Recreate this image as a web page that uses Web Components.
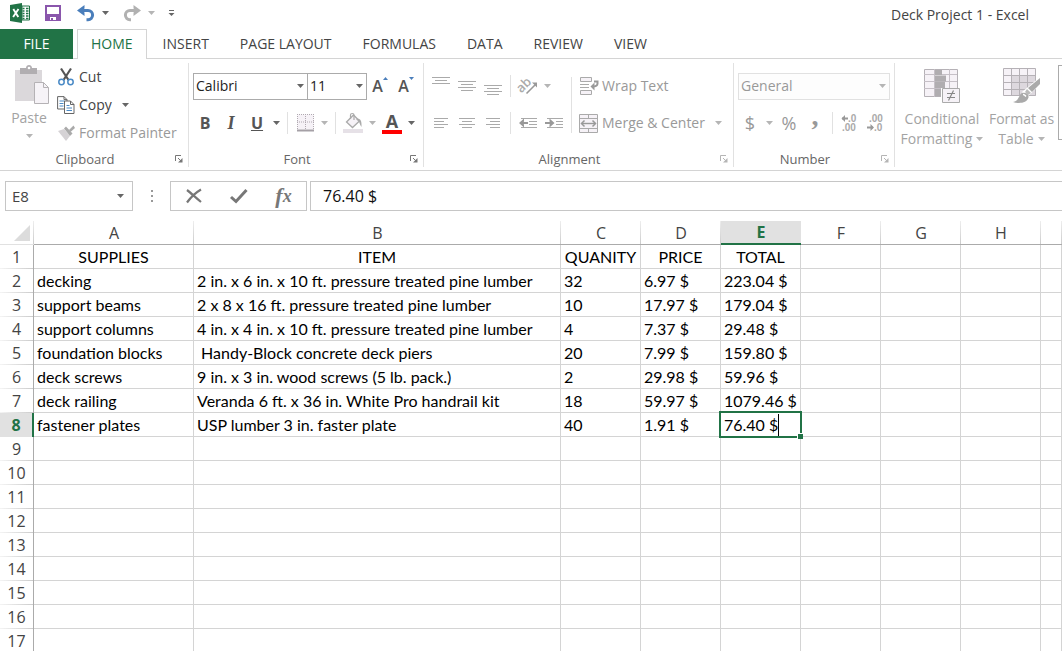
<!DOCTYPE html>
<html lang="en">
<head>
<meta charset="utf-8">
<title>Deck Project 1 - Excel</title>
<style>
  html, body { margin: 0; height: 100%; }
  body {
    --ui: "Open Sans", "Noto Sans", sans-serif;
    --cell: Lato, "Open Sans", sans-serif;
    --green: #217346;
    --line: #d4d4d4;
    --text: #444;
    --dim: #a3a3a3;
    font: 14px/20px var(--ui);
    color: var(--text);
    background: #fff;
    overflow: hidden;
  }
</style>
</head>
<body>
<excel-window>
  <title-bar slot="title">Deck Project 1 - Excel</title-bar>
  <tab-strip slot="tabs"></tab-strip>
  <ribbon-bar slot="ribbon"></ribbon-bar>
  <formula-bar slot="formula" cell="E8" value="76.40 $"></formula-bar>
  <sheet-grid slot="sheet"></sheet-grid>
</excel-window>

<script>
const ICONS = {
  excel: [20, 20, `<path d="M12 3h7.500v14H12z" fill="#fff" stroke="#217346"/><path d="M12.500 5.500h2M16 5.500h2.500M12.500 8h2M16 8h2.500M12.500 10.500h2M16 10.500h2.500M12.500 13h2M16 13h2.500M12.500 15.500h2M16 15.500h2.500" stroke="#217346" stroke-width="1.400"/><path d="M0 2 12 0v20L0 18z" fill="#217346"/><path d="m3.300 6 5 8M8.500 6l-5.400 8" stroke="#fff" stroke-width="1.900"/>`],
  save: [16, 16, `<path d="M1 1h14v14H1z" fill="#fff" stroke="#8a56ac" stroke-width="2"/><path d="M0 9h16v7h-4v-4H4v4H0z" fill="#8a56ac"/><path d="M4 11h8v5H4z" fill="#8a56ac"/><path d="M5 12h6v3H8v-2H6v2H5z" fill="#fff"/>`],
  undo: [18, 16, `<path d="M3 5.500h8a4.600 4.600 0 0 1 0 9.200H9.500" fill="none" stroke="#4a7ebb" stroke-width="3"/><path d="M7.500 0 0 5.500 7.500 11V7.500L5 5.500l2.500-2z" fill="#4a7ebb"/>`],
  redo: [18, 16, `<path d="M15 5.500H7a4.600 4.600 0 0 0 0 9.200h1" fill="none" stroke="#b1b1b1" stroke-width="3"/><path d="m10.500 0 7.500 5.500-7.500 5.500V7.500l2.500-2-2.500-2z" fill="#b1b1b1"/>`],
  qat: [7, 8, `<path d="M1 1.500h5" stroke="#666"/><path d="M.5 4h6l-3 3z" fill="#666"/>`],
  paste: [40, 40, `<g transform="translate(6 0)"><path d="M0 5h27v31H0z" fill="#dbd8db"/><path d="M5 3h6c0-4 6-4 6 0h5v6H5z" fill="#b1aeb1"/><circle cx="14" cy="3" r="1.300" fill="#fff"/><path d="M19.500 17.500h9l5 5v16h-14z" fill="#f6f3f7" stroke="#b5b2b5"/><path d="M28.500 17.500v5h5" fill="none" stroke="#b5b2b5"/></g>`],
  cut: [16, 18, `<path d="M3 .5 10.500 12M13 .5 5.500 12" stroke="#555" stroke-width="2.200"/><circle cx="3.500" cy="14" r="2.700" fill="none" stroke="#4a8ac6" stroke-width="1.500"/><circle cx="12.500" cy="14" r="2.700" fill="none" stroke="#4a8ac6" stroke-width="1.500"/>`],
  copy: [18, 18, `<path d="M.6.600h6.400l3 3V13H.6zM7 .6v3h3" fill="#fff" stroke="#666"/><path d="M2.500 5h5M2.500 7.500h4M2.500 10h4" stroke="#4a8ac6"/><path d="M7.500 5h6l3.500 3.500v9H7.500zM13.500 5v3.500H17" fill="#fff" stroke="#666"/><path d="M9.500 9.500h3M9.500 12h5.500M9.500 14.500H15" stroke="#4a8ac6" stroke-width="1.200"/>`],
  painter: [17, 16, `<path d="m0 6 6-2 6 7-4 5z" fill="#d5d2d5"/><path d="m6 3.500 2-2 6.500 7-2.500 2.500z" fill="#aaa"/><path d="m11 5 4.500-4.500L17 3l-4.500 4z" fill="#aaa"/>`],
  borders: [17, 18, `<path d="M.5.500h16v15H.5z" fill="#f6f2f7"/><path d="M.5 0v16M8.500 0v16M16.500 0v16M0 .5h17M0 8h17" stroke="#b0a9b1" stroke-dasharray="1 1"/><path d="M0 16.500h17" stroke="#a5a0a6" stroke-width="2"/>`],
  fill: [20, 20, `<path d="M0 16h20v4H0z" fill="#e6e1e7"/><path d="m3.500 9 7-7 6 6-7 6.500z" fill="#f6f2f7" stroke="#aaa" stroke-width="1.300"/><path d="M7.500 6V2c0-2 3.500-2 3.500 0v5" fill="none" stroke="#aaa" stroke-width="1.200"/><path d="M13 6c4-1 6 1 5.500 8C16.500 12 17 9 15 8z" fill="#aaa"/>`],
  top: [18, 20, `<path d="M0 1.500h18M3 4.500h12M0 7.500h18" stroke="#aaa"/>`],
  middle: [18, 20, `<path d="M0 5.500h18M3 8.500h12M0 11.500h18M3 14.500h12" stroke="#aaa"/>`],
  bottom: [18, 20, `<path d="M0 9.500h18M3 12.500h12M0 15.500h18M3 18.500h12" stroke="#aaa"/>`],
  left: [16, 12, `<path d="M1 1.500h14M1 4.500h10M1 7.500h14M1 10.500h10" stroke="#aaa"/>`],
  center: [16, 12, `<path d="M0 1.500h16M3 4.500h10M0 7.500h16M3 10.500h10" stroke="#aaa"/>`],
  right: [16, 12, `<path d="M1 1.500h14M5 4.500h10M1 7.500h14M5 10.500h10" stroke="#aaa"/>`],
  orient: [20, 20, `<text x="-2" y="13" transform="rotate(-45 6 9)" font-family="Open Sans, sans-serif" font-size="13" font-weight="600" fill="#aaa">ab</text><path d="m8.500 17.500 9-9" stroke="#999" stroke-width="1.600"/><path d="M19 6.500v5l-5-5z" fill="#999"/>`],
  outdent: [18, 12, `<path d="M2 1.500h16M10 4.500h8M10 7.500h8M2 10.500h16" stroke="#aaa"/><path d="M2 6h7" stroke="#999" stroke-width="2"/><path d="M5 1.500 0 6l5 4.500V7.500L3.500 6 5 4.500z" fill="#999"/>`],
  indent: [18, 12, `<path d="M2 1.500h16M11 4.500h7M11 7.500h7M2 10.500h16" stroke="#aaa"/><path d="M0 6h7" stroke="#999" stroke-width="2"/><path d="M4.500 1.500 9.500 6l-5 4.500V7.500L6 6 4.500 4.500z" fill="#999"/>`],
  wrap: [19, 18, `<path d="M.5.500h11v4H.5zM.5 13.500h11v4H.5z" fill="#f6f2f7" stroke="#aaa"/><path d="M0 7.500h9M0 10.500h9" stroke="#aaa"/><path d="M14 4.500h3.500v2c0 2-1 3-5 3" fill="none" stroke="#999" stroke-width="2"/><path d="m14.500 5.500-4 4 4 4v-3z" fill="#999"/>`],
  merge: [20, 19, `<path d="M.5.500h18v18H.5z" fill="#f6f2f7" stroke="#aaa"/><path d="M0 4.500h19M0 14.500h19M9.500 0v4.500M9.500 14.500V19" stroke="#aaa"/><path d="M3 9.500h13" stroke="#999" stroke-width="1.400"/><path d="M5.500 6.500 2.500 9.500l3 3M13.500 6.500l3 3-3 3" fill="none" stroke="#999" stroke-width="1.500"/>`],
  moredec: [18, 20, `<path d="M1 5.500h6" stroke="#999" stroke-width="2"/><path d="M4 2 .5 5.500 4 9z" fill="#999"/><g font-family="Liberation Sans, sans-serif" font-size="10" font-weight="700" fill="#aaa"><text x="7" y="9">.0</text><text x="1" y="18">.00</text></g>`],
  lessdec: [18, 20, `<path d="M0 14.500h6" stroke="#999" stroke-width="2"/><path d="M3.500 11 7 14.500 3.500 18z" fill="#999"/><g font-family="Liberation Sans, sans-serif" font-size="10" font-weight="700" fill="#aaa"><text x="2" y="9">.00</text><text x="7" y="18">.0</text></g>`],
  cond: [37, 36, `<path d="M.5 1.500h33v27H.5z" fill="#f6f2f7" stroke="#b5b1b6"/><path d="M0 6.500h33M0 13.500h33M0 20.500h33M10.500 1v28M25.500 1v28" stroke="#c6c0c7"/><path d="M11 2h7v5h-7zM11 7.500h11v6H11zM11 14h10v6H11zM11 21h7v7h-7z" fill="#b0adb0"/><path d="M17 20h20v16H17z" fill="#fff"/><path d="M18.500 20.500h17v14h-17z" fill="#f6f2f7" stroke="#aaa"/><path d="M23 25.500h8M23 29.500h8M29.500 22.500l-5 10" stroke="#888" stroke-width="1.200"/>`],
  table: [38, 36, `<path d="M.5.500h32v27H.5z" fill="#f6f2f7"/><path d="M8 7h25v21H8z" fill="#ddd8de"/><path d="M.5.500h32v27H.5zM0 7.500h33M0 14.500h33M0 21.500h33M8.500 0v28M16.500 0v28M24.500 0v28" fill="none" stroke="#b5b1b6"/><path d="M37 9v8L24 29l-5-5z" fill="#fff"/><path d="M37 10v6l-8 8-4-4z" fill="#aaa"/><path d="m24 21 4 4-3 2-3-3z" fill="#bbb"/><path d="M22 25c2 0 4 2 3.500 4.500C24 35 16 36 10 34c5-1 5-4 7-7 1-2 3-2.500 5-2z" fill="#aaa"/><path d="M20 26.500c2 0 2 1 3 2" stroke="#fff" fill="none" stroke-width="1.500"/>`],
  cancel: [16, 14, `<path d="M1 1c4 3 9 8 14 12M15 .5C9 4 5 8 1 13.500" fill="none" stroke="#777" stroke-width="2.200"/>`],
  enter: [18, 14, `<path d="m1 8 5 4.500L16.500 1" fill="none" stroke="#777" stroke-width="3"/>`],
  launch: [8, 8, `<path d="M.5 6V.5H6" fill="none" stroke="currentColor"/><path d="M3 3l3.500 3.500" stroke="currentColor"/><path d="M7.500 3v4.500H3z" fill="currentColor"/>`],
  arrow: [7, 4, `<path d="M0 0h7L3.500 4z" fill="currentColor"/>`],
};
const icon = (name) => {
  const [w, h, body] = ICONS[name];
  return `<svg width="${w}" height="${h}" viewBox="0 0 ${w} ${h}" fill="none" aria-hidden="true">${body}</svg>`;
};
const define = (name, css, html) => customElements.define(name, class extends HTMLElement {
  constructor() {
    super();
    this.attachShadow({ mode: "open" });
  }
  connectedCallback() {
    const t = document.createElement("template");
    t.innerHTML = `<style>:host,*{box-sizing:border-box}svg{display:block;flex:none;overflow:visible}button{font:inherit;color:inherit;background:none;border:0;padding:0;margin:0}${css}</style>${typeof html === "function" ? html(this) : html}`;
    this.shadowRoot.replaceChildren(t.content.cloneNode(true));
  }
});

/* Square command button; the slot carries a letter or a caption beside the icon. */
define("tool-button", `
  :host { display: flex; flex: none; height: 28px; color: #555; }
  :host([off]) { color: #999; }
  :host([off]) .drop { color: #b5b5b5; }
  button { display: flex; align-items: center; }
  .face { display: flex; width: 26px; justify-content: center; }
  .drop { width: 13px; justify-content: center; color: #666; }
  :host([caption]) .drop { width: 27px; }
`, (el) => {
  const face = el.hasAttribute("icon") ? icon(el.getAttribute("icon")) : "<slot></slot>";
  const caption = el.hasAttribute("caption") ? `<span>${el.getAttribute("caption")}</span>` : "";
  const name = el.getAttribute("name") || el.getAttribute("caption");
  return `<button type="button" aria-label="${name}"><span class="face">${face}</span>${caption}</button>` +
    (el.hasAttribute("drop") ? `<button type="button" class="drop" aria-label="${name} options">${icon("arrow")}</button>` : "");
});

define("tool-divider", `
  :host { display: block; flex: none; width: 1px; height: 22px; margin: 0 4px; background: #e1e1e1; }
  :host([tall]) { height: 56px; }
`, "");

define("big-button", `
  :host { display: block; flex: none; color: var(--dim); }
  button { display: flex; flex-direction: column; align-items: center; width: 100%; white-space: nowrap; }
  .pic { display: flex; height: 40px; margin-bottom: 3px; align-items: center; }
  .more { display: flex; align-items: center; gap: 4px; min-height: 16px; color: #b5b5b5; }
  ::slotted([slot=second]) { color: var(--dim); }
  :host([lines]) .more { min-height: 20px; }
`, (el) => `<button type="button"><span class="pic">${icon(el.getAttribute("icon"))}</span><span><slot></slot></span><span class="more"><slot name="second"></slot>${icon("arrow")}</span></button>`);

define("pick-list", `
  :host { display: grid; align-items: center; height: 27px; color: #222; }
  select { grid-area: 1/1; width: 100%; height: 27px; appearance: none; border: 1px solid #ababab; border-radius: 0; background: #fff; padding: 0 2px; font: inherit; color: inherit; opacity: 1; }
  svg { grid-area: 1/1; justify-self: end; margin-right: 4px; color: #666; pointer-events: none; }
  :host([off]) { color: #999; }
  :host([off]) select { border-color: #e1e1e1; background: #fdfdfd; }
  :host([off]) svg { color: #b5b5b5; }
`, (el) => `<select aria-label="${el.getAttribute("name")}"><option>${el.getAttribute("value")}</option></select>${icon("arrow")}`);

define("ribbon-group", `
  :host { display: flex; flex-direction: column; flex: none; border-right: 1px solid #e1e1e1; }
  .body { flex: 1; }
  footer { display: flex; align-items: center; height: 16px; padding-right: 5px; font-size: 13px; line-height: 16px; color: #666; }
  footer span { flex: 1; text-align: center; padding-right: 5px; }
  .launch { color: #777; }
  :host([off]) .launch { color: #b5b5b5; }
`, (el) => `<div class="body"><slot></slot></div><footer><span>${el.getAttribute("label")}</span><button type="button" class="launch" aria-label="${el.getAttribute("label")} settings">${icon("launch")}</button></footer>`);

define("title-bar", `
  :host { display: flex; align-items: center; gap: 7px; height: 29px; padding: 0 33px 3px 7px; }
  h1 { flex: 1; margin: 0; text-align: right; font-size: 14px; font-weight: 400; padding-top: 3px; }
  .qat { width: 13px; display: flex; justify-content: center; }
`, `<tool-button icon="excel" name="Excel"></tool-button>
  <tool-button icon="save" name="Save"></tool-button>
  <tool-button icon="undo" name="Undo" drop></tool-button>
  <tool-button icon="redo" name="Redo" drop off></tool-button>
  <button type="button" class="qat" aria-label="Customize toolbar">${icon("qat")}</button>
  <h1><slot></slot></h1>`);

define("tab-strip", `
  :host { display: block; }
  nav { display: flex; gap: 1px; height: 30px; border-bottom: 1px solid var(--line); }
  a { display: flex; align-items: center; height: 29px; padding: 0 15px; color: inherit; text-decoration: none; white-space: nowrap; }
  .file { width: 73px; height: 30px; margin-right: 3px; padding: 0; justify-content: center; background: var(--green); color: #fff; }
  .on { height: 30px; padding: 0 13px 1px; border: 1px solid var(--line); border-bottom: 0; background: #fff; color: var(--green); }
`, `<nav><a class="file" href="#file">FILE</a><a class="on" href="#home">HOME</a>${
  ["INSERT", "PAGE LAYOUT", "FORMULAS", "DATA", "REVIEW", "VIEW"].map((t) => `<a href="#${t.toLowerCase().replace(" ", "-")}">${t}</a>`).join("")}</nav>`);

define("ribbon-bar", `
  :host { display: flex; height: 112px; padding: 4px 0 3px; border-bottom: 1px solid var(--line); overflow: hidden; }
  .row { display: flex; align-items: center; height: 28px; }
  .row + .row { margin-top: 9px; }
  .clip { width: 189px; }
  .clip .cols { display: flex; padding-left: 9px; }
  .clip big-button { width: 40px; margin-top: 2px; }
  .tools { display: flex; flex-direction: column; padding-left: 4px; }
  .font { width: 235px; }
  .font .in, .num .in { padding: 9px 3px 0; }
  .align { width: 310px; }
  .align .in { display: flex; align-items: center; padding: 9px 0 0 4px; }
  .num { width: 161px; }
  .fam { width: 115px; margin-left: 1px; }
  .size { width: 60px; margin-left: -1px; }
  .num pick-list { width: 152px; margin-left: 1px; }
  b, u, em { font-size: 16px; line-height: 20px; }
  i, u { font-weight: 700; }
  i { font-family: "Liberation Serif", serif; font-size: 18px; }
  .cur { font-style: normal; font-size: 18px; }
  .com { font: 700 28px/16px "Liberation Serif", serif; padding-bottom: 14px; }
  .grow { display: flex; align-items: flex-end; font-weight: 600; font-size: 16px; }
  .grow svg { align-self: flex-start; margin-top: 1px; color: #4a7ebb; }
  .ink { display: block; width: 20px; text-align: center; font-weight: 700; font-size: 18px; line-height: 17px; border-bottom: 4px solid #f00; }
  .styles { display: flex; flex: 1; padding-left: 4px; min-width: 0; }
  .styles big-button { width: 86px; padding-top: 3px; }
  .styles .as { width: 73px; }
  .gallery { flex: 1 0 8px; height: 75px; margin: 2px 0 0; border: 1px solid #ababab; border-right: 0; }
`, `<ribbon-group class="clip" label="Clipboard"><div class="cols">
    <big-button icon="paste">Paste</big-button>
    <div class="tools">
      <tool-button icon="cut" caption="Cut" style="color:#444"></tool-button>
      <tool-button icon="copy" caption="Copy" drop style="color:#444"></tool-button>
      <tool-button icon="painter" caption="Format Painter" off></tool-button>
    </div></div></ribbon-group>
  <ribbon-group class="font" label="Font"><div class="in">
    <div class="row"><pick-list class="fam" name="Font" value="Calibri"></pick-list><pick-list class="size" name="Font size" value="11"></pick-list>
      <tool-button name="Grow font"><span class="grow">A<svg width="5" height="3"><path d="M0 3h5L2.500 0z" fill="currentColor"/></svg></span></tool-button>
      <tool-button name="Shrink font"><span class="grow">A<svg width="5" height="3"><path d="M0 0h5L2.500 3z" fill="currentColor"/></svg></span></tool-button></div>
    <div class="row"><tool-button name="Bold"><b>B</b></tool-button><tool-button name="Italic"><i>I</i></tool-button><tool-button name="Underline" drop><u>U</u></tool-button>
      <tool-divider></tool-divider><tool-button icon="borders" name="Borders" drop off></tool-button>
      <tool-divider></tool-divider><tool-button icon="fill" name="Fill color" drop off></tool-button><tool-button name="Font color" drop><span class="ink">A</span></tool-button></div>
  </div></ribbon-group>
  <ribbon-group class="align" label="Alignment" off><div class="in">
    <div>
      <div class="row"><tool-button icon="top" name="Top align" off></tool-button><tool-button icon="middle" name="Middle align" off></tool-button><tool-button icon="bottom" name="Bottom align" off></tool-button>
        <tool-divider></tool-divider><tool-button icon="orient" name="Orientation" drop off></tool-button></div>
      <div class="row"><tool-button icon="left" name="Align left" off></tool-button><tool-button icon="center" name="Center" off></tool-button><tool-button icon="right" name="Align right" off></tool-button>
        <tool-divider></tool-divider><tool-button icon="outdent" name="Decrease indent" off></tool-button><tool-button icon="indent" name="Increase indent" off></tool-button></div>
    </div>
    <tool-divider tall></tool-divider>
    <div>
      <div class="row"><tool-button icon="wrap" caption="Wrap Text" off></tool-button></div>
      <div class="row"><tool-button icon="merge" caption="Merge &amp; Center" drop off></tool-button></div>
    </div>
  </div></ribbon-group>
  <ribbon-group class="num" label="Number" off><div class="in">
    <div class="row"><pick-list name="Number format" value="General" off></pick-list></div>
    <div class="row"><tool-button name="Accounting format" drop off><em class="cur">$</em></tool-button><tool-button name="Percent style" off><em class="cur">%</em></tool-button><tool-button name="Comma style" off><span class="com">,</span></tool-button>
      <tool-divider></tool-divider><tool-button icon="moredec" name="Increase decimal" off></tool-button><tool-button icon="lessdec" name="Decrease decimal" off></tool-button></div>
  </div></ribbon-group>
  <div class="styles">
    <big-button icon="cond" lines>Conditional<span slot="second">Formatting</span></big-button>
    <big-button class="as" icon="table" lines>Format as<span slot="second">Table</span></big-button>
    <div class="gallery"></div>
  </div>`);

define("formula-bar", `
  :host { display: flex; align-items: center; padding: 10px 0 10px 5px; font-size: 15px; }
  .box { display: flex; align-items: center; height: 30px; border: 1px solid #c6c6c6; }
  input { width: 100%; min-width: 0; border: 0; padding: 0; outline: 0; background: none; font: inherit; color: inherit; }
  .name { width: 128px; padding: 0 8px 0 6px; }
  .name button { color: #666; }
  .grip { width: 37px; display: flex; justify-content: center; color: #999; }
  .acts { width: 137px; }
  .acts button { flex: 1; display: flex; justify-content: center; align-items: center; height: 28px; }
  .acts .fx { font: italic 700 22px/24px "Liberation Serif", serif; color: #777; }
  .fx small { font-size: 18px; }
  .entry { flex: 1; margin-left: 3px; padding-left: 12px; border-right: 0; color: #111; font-size: 16px; }
`, (el) => `<div class="box name"><input aria-label="Name box" value="${el.getAttribute("cell")}"><button type="button" aria-label="Names">${icon("arrow")}</button></div>
  <div class="grip"><svg width="2" height="12"><path d="M0 1h2M0 6h2M0 11h2" stroke="currentColor" stroke-width="2"/></svg></div>
  <div class="box acts"><button type="button" aria-label="Cancel">${icon("cancel")}</button><button type="button" aria-label="Enter">${icon("enter")}</button><button type="button" class="fx" aria-label="Insert function">f<small>x</small></button></div>
  <div class="box entry"><input aria-label="Formula" value="${el.getAttribute("value")}"></div>`);

const ROWS = [
  ["SUPPLIES", "ITEM", "QUANITY", "PRICE", "TOTAL"],
  ["decking", "2 in. x 6 in. x 10 ft. pressure treated pine lumber", "32", "6.97 $", "223.04 $"],
  ["support beams", "2 x 8 x 16 ft. pressure treated pine lumber", "10", "17.97 $", "179.04 $"],
  ["support columns", "4 in. x 4 in. x 10 ft. pressure treated pine lumber", "4", "7.37 $", "29.48 $"],
  ["foundation blocks", "&nbsp;Handy-Block concrete deck piers", "20", "7.99 $", "159.80 $"],
  ["deck screws", "9 in. x 3 in. wood screws (5 lb. pack.)", "2", "29.98 $", "59.96 $"],
  ["deck railing", "Veranda 6 ft. x 36 in. White Pro handrail kit", "18", "59.97 $", "1079.46 $"],
  ["fastener plates", "USP lumber 3 in. faster plate", "40", "1.91 $", "76.40 $"],
];
const COLS = ["A", "B", "C", "D", "E", "F", "G", "H", ""];
const cell = (r, c) => {
  const text = (ROWS[r] || [])[c] || "";
  return r === 7 && c === 4
    ? `<td class="active"><span class="edit" role="textbox">${text}</span></td>`
    : `<td>${text}</td>`;
};
define("sheet-grid", `
  :host { display: block; overflow: hidden; }
  table { width: 100%; table-layout: fixed; border-spacing: 0; font: 16px/20px var(--cell); color: #000; }
  .h { width: 34px; } .a { width: 160px; } .b { width: 367px; } .n { width: 80px; }
  th, td { height: 24px; padding: 0 0 0 3px; white-space: nowrap; text-align: left; border: solid var(--line); border-width: 0 1px 1px 0; }
  th { padding: 0; text-align: center; font: 16px/20px var(--ui); color: #444; }
  thead th { border-right: 0; border-bottom-color: #ababab; background: linear-gradient(#eee, #ccc) right / 1px 100% no-repeat; }
  thead .corner { border-bottom-color: #e1e1e1; }
  .corner svg { margin-left: 14px; }
  tbody th { border-bottom: 0; border-right-color: #ababab; background: linear-gradient(90deg, #f4f4f4, #ccc) bottom / 100% 1px no-repeat; }
  tbody tr:first-child td { text-align: center; padding: 0; }
  thead .sel { border-bottom: 2px solid var(--green); }
  tbody .sel { border-right: 2px solid var(--green); }
  th.sel { background: #e1e1e1; color: var(--green); font-weight: 700; }
  .active { position: relative; }
  .active::before { content: ""; position: absolute; inset: -2px; border: 2px solid var(--green); }
  .active::after { content: ""; position: absolute; right: -3px; bottom: -3px; width: 5px; height: 5px; background: var(--green); border: solid #fff; border-width: 1px 0 0 1px; box-sizing: content-box; }
  .edit { display: inline-block; height: 22px; line-height: 22px; border-right: 1px solid #000; vertical-align: top; }
`, `<table aria-label="Deck Project 1"><colgroup><col class="h"><col class="a"><col class="b">${'<col class="n">'.repeat(6)}<col></colgroup>
  <thead><tr><th class="corner" aria-label="Select all"><svg width="16" height="16"><path d="M16 0v16H0z" fill="#dcdcdc"/></svg></th>${COLS.map((c) => `<th scope="col"${c === "E" ? ' class="sel"' : ""}>${c}</th>`).join("")}</tr></thead>
  <tbody>${Array.from({ length: 17 }, (_, r) => `<tr><th scope="row"${r === 7 ? ' class="sel"' : ""}>${r + 1}</th>${COLS.map((_, c) => cell(r, c)).join("")}</tr>`).join("")}</tbody></table>`);

define("excel-window", `
  :host { display: flex; flex-direction: column; height: 100vh; overflow: hidden; }
  ::slotted(*) { flex: none; }
  ::slotted(sheet-grid) { flex: 1; min-height: 0; }
`, `<slot name="title"></slot><slot name="tabs"></slot><slot name="ribbon"></slot><slot name="formula"></slot><slot name="sheet"></slot>`);
</script>
</body>
</html>
